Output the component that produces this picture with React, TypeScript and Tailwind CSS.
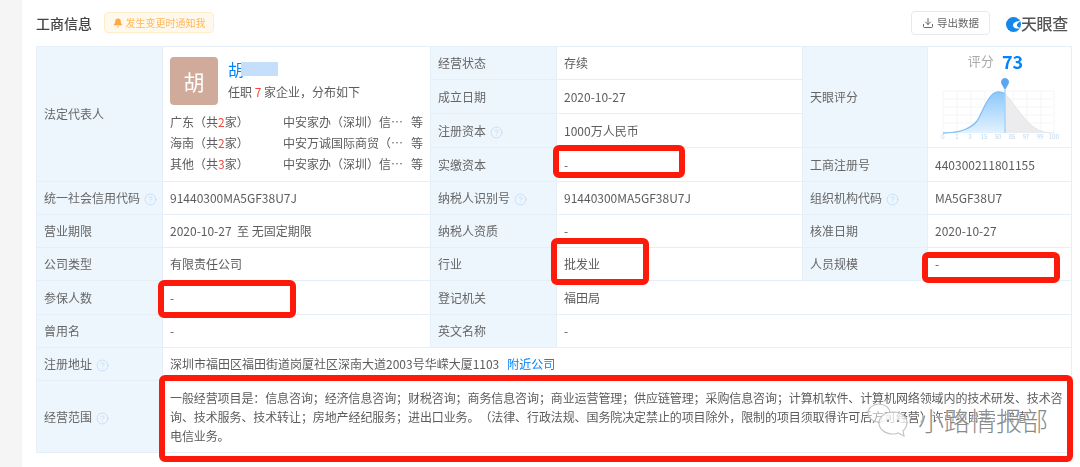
import { Bell, CircleHelp, Download } from 'lucide-react';
import type { ReactNode } from 'react';

const FONT = "font-['Noto_Sans_CJK_SC','Noto_Sans',sans-serif]";

function Help() {
  return <CircleHelp size={13} strokeWidth={1.2} className="ml-1 inline-block align-[-3px] text-[#b5d5f3]" />;
}

function Label({ children, help, rowSpan }: { children: ReactNode; help?: boolean; rowSpan?: number }) {
  return (
    <td rowSpan={rowSpan} className="border border-[#e6eff8] bg-[#edf5fd] pl-[7px] text-[#666]">
      {children}
      {help && <Help />}
    </td>
  );
}

function Value({ children, colSpan }: { children: ReactNode; colSpan?: number }) {
  return (
    <td colSpan={colSpan} className="border border-[#e6eff8] pl-[7px] text-[#5c5c5c]">
      {children}
    </td>
  );
}

const REGIONS = [
  { name: '广东', count: 2, company: '中安家办（深圳）信…' },
  { name: '海南', count: 2, company: '中安万诚国际商贸（…' },
  { name: '其他', count: 3, company: '中安家办（深圳）信…' },
];

function Person() {
  return (
    <div className="px-[7px] pt-[10px]">
      <div className="flex">
        <div className="flex h-12 w-12 items-center justify-center rounded bg-[#d0ab9b] text-[21px] text-white">胡</div>
        <div className="ml-[10px]">
          <div className="flex h-6 items-center text-base text-[#0084ff]">
            胡
            <div className="-ml-[3px] h-[14px] w-[37px] bg-[#c5defc]" />
          </div>
          <div className="mt-[3px] text-[#5c5c5c]">
            任职 <span className="text-[#f5483b]">7</span> 家企业，分布如下
          </div>
        </div>
      </div>
      <div className="mt-[8px] space-y-[3px]">
        {REGIONS.map((r, i) => (
          <div key={i} className="flex h-[18px] items-center whitespace-nowrap text-[#5c5c5c]">
            <span className="w-[113px]">
              {r.name}（共<span className="text-[#f5483b]">{r.count}</span>家）
            </span>
            <span className="w-[128px]">{r.company}</span>
            <span>等</span>
          </div>
        ))}
      </div>
    </div>
  );
}

function ScoreChart() {
  const labels = [
    [0, '0'], [14, '1'], [27, '3'], [41, '15'], [55, '50'], [69, '85'], [83, '97'], [97, '99'], [111, '100'],
  ] as const;
  const left = 'M0 44 C10 44 16 43 22 40.5 C28 38 31 36 34 32 C38 26 41 17 45 11 C48 6 51 3 55 2.8 C58 2.7 60 3.5 62 4.7';
  const right = 'M62 4.7 C68 11 72 18 78 25 C83 31 87 36 92 39 C98 43 104 44 111 44';
  return (
    <svg width="122" height="66" viewBox="-4 -14 122 66" className="mx-auto block">
      <defs>
        <linearGradient id="scoreFill" x1="0" y1="0" x2="0" y2="1">
          <stop offset="0" stopColor="#8cc8fb" />
          <stop offset="1" stopColor="#e3f2ff" />
        </linearGradient>
      </defs>
      {[0, 14, 28, 42, 56, 70, 84, 98, 111].map((x) => (
        <line key={x} x1={x} y1="2" x2={x} y2="44" stroke="#f4f5f7" strokeWidth="1" />
      ))}
      {[2, 10, 18, 26, 34].map((y) => (
        <line key={y} x1="0" y1={y} x2="111" y2={y} stroke="#f4f5f7" strokeWidth="1" />
      ))}
      <path d={`${right} L62 44 Z`} fill="#ececee" />
      <path d={`${left} L62 44 Z`} fill="url(#scoreFill)" />
      <path d={left} fill="none" stroke="#7fbdf8" strokeWidth="1.3" />
      <path d={right} fill="none" stroke="#e3e3e6" strokeWidth="1" />
      <line x1="62" y1="1" x2="62" y2="44" stroke="#a4d2fb" strokeWidth="1.4" />
      <path d="M62 1 L58.5 -5 A4 4 0 1 1 65.5 -5 Z" fill="#5ba6ee" />
      {labels.map(([x, t]) => (
        <text key={t} x={x} y="50" textAnchor="middle" fontSize="6" fill="#b9d6ef">
          {t}
        </text>
      ))}
    </svg>
  );
}

function Logo() {
  return (
    <div className="flex items-center">
      <svg width="15" height="15" viewBox="0 0 16 16" className="mt-[3px]">
        <circle cx="8" cy="8" r="8" fill="#1487e8" />
        <path d="M16 4 C11.5 4 7.5 6 7.5 9 C7.5 11.5 11 13 15.5 12 C13 11 11.5 10 11.5 8.8 C11.5 7.2 13 6 16 4Z" fill="#fff" />
      </svg>
      <span className="text-base leading-none font-medium tracking-[-0.3px] text-[#555]">天眼查</span>
    </div>
  );
}

function RedBox({ className }: { className: string }) {
  return <div className={`absolute rounded-[6px] border-[6px] border-[#fe1a0a] ${className}`} />;
}

export default function App() {
  return (
    <div className={`relative flex h-[467px] w-[1080px] overflow-hidden bg-white text-xs ${FONT}`}>
      <div className="w-[22px] shrink-0 bg-[#f5f5f5]" />
      <div className="w-[1049px] pl-[14px] blur-[0.4px]">
        <div className="flex h-[46px] items-center pr-[3px] pb-[1px]">
          <span className="text-sm font-medium text-[#444]">工商信息</span>
          <span className="ml-3 flex h-[21px] w-[110px] items-center justify-center rounded-sm border border-[#ffeccb] bg-[#fff8ec] text-[10px] text-[#ffb95f]">
            <Bell size={10} fill="#ffa940" strokeWidth={1.5} className="mr-[3px] text-[#ffa940]" />
            发生变更时通知我
          </span>
          <div className="ml-auto flex items-center">
            <span className="flex h-[24px] w-[79px] items-center justify-center rounded-sm border border-[#e8e8e8] text-[10.5px] text-[#666]">
              <Download size={12} className="mr-[3px]" />
              导出数据
            </span>
            <div className="ml-4">
              <Logo />
            </div>
          </div>
        </div>
        <table className="w-[1035px] table-fixed border-collapse">
          <colgroup>
            <col className="w-[126px]" />
            <col className="w-[268px]" />
            <col className="w-[126px]" />
            <col className="w-[246px]" />
            <col className="w-[125px]" />
            <col className="w-[144px]" />
          </colgroup>
          <tbody>
            <tr className="h-[33px]">
              <Label rowSpan={4}>法定代表人</Label>
              <td rowSpan={4} className="border border-[#e6eff8] align-top">
                <Person />
              </td>
              <Label>经营状态</Label>
              <Value>存续</Value>
              <Label rowSpan={3}>天眼评分</Label>
              <td rowSpan={3} className="border border-[#e6eff8] align-top">
                <div className="flex h-[28px] items-center justify-center pr-[8px]">
                  <span className="text-[13px] text-[#aaa]">评分</span>
                  <span className="ml-2 text-lg leading-none font-bold text-[#0084ff]">73</span>
                </div>
                <ScoreChart />
              </td>
            </tr>
            <tr className="h-[34px]">
              <Label>成立日期</Label>
              <Value>2020-10-27</Value>
            </tr>
            <tr className="h-[34px]">
              <Label help>注册资本</Label>
              <Value>1000万人民币</Value>
            </tr>
            <tr className="h-[34px]">
              <Label>实缴资本</Label>
              <Value>-</Value>
              <Label>工商注册号</Label>
              <Value>440300211801155</Value>
            </tr>
            <tr className="h-[33px]">
              <Label help>统一社会信用代码</Label>
              <Value>91440300MA5GF38U7J</Value>
              <Label help>纳税人识别号</Label>
              <Value>91440300MA5GF38U7J</Value>
              <Label help>组织机构代码</Label>
              <Value>MA5GF38U7</Value>
            </tr>
            <tr className="h-[33px]">
              <Label>营业期限</Label>
              <Value>2020-10-27&nbsp; 至 无固定期限</Value>
              <Label>纳税人资质</Label>
              <Value>-</Value>
              <Label>核准日期</Label>
              <Value>2020-10-27</Value>
            </tr>
            <tr className="h-[33px]">
              <Label>公司类型</Label>
              <Value>有限责任公司</Value>
              <Label>行业</Label>
              <Value>批发业</Value>
              <Label>人员规模</Label>
              <Value>-</Value>
            </tr>
            <tr className="h-[34px]">
              <Label>参保人数</Label>
              <Value>-</Value>
              <Label>登记机关</Label>
              <Value colSpan={3}>福田局</Value>
            </tr>
            <tr className="h-[33px]">
              <Label>曾用名</Label>
              <Value>-</Value>
              <Label>英文名称</Label>
              <Value colSpan={3}>-</Value>
            </tr>
            <tr className="h-[33px]">
              <Label help>注册地址</Label>
              <Value colSpan={5}>
                深圳市福田区福田街道岗厦社区深南大道2003号华嵘大厦1103
                <span className="ml-2 text-[#0084ff]">附近公司</span>
              </Value>
            </tr>
            <tr className="h-[72px]">
              <Label help>经营范围</Label>
              <td colSpan={5} className="border border-[#e6eff8] pl-[7px] leading-[19px] tracking-[-0.1px] whitespace-nowrap text-[#5c5c5c] [text-spacing-trim:space-all]">
                一般经营项目是：信息咨询；经济信息咨询；财税咨询；商务信息咨询；商业运营管理；供应链管理；采购信息咨询；计算机软件、计算机网络领域内的技术研发、技术咨
                <br />
                询、技术服务、技术转让；房地产经纪服务；进出口业务。（法律、行政法规、国务院决定禁止的项目除外，限制的项目须取得许可后方可经营）许可项目是：增值
                <br />
                电信业务。
              </td>
            </tr>
          </tbody>
        </table>
      </div>
      <RedBox className="top-[145px] left-[553px] h-[33px] w-[132px]" />
      <RedBox className="top-[238px] left-[551px] h-[47px] w-[98px]" />
      <RedBox className="top-[252px] left-[922px] h-[31px] w-[138px]" />
      <RedBox className="top-[280px] left-[158px] h-[38px] w-[138px]" />
      <RedBox className="top-[375px] left-[159px] h-[87px] w-[914px]" />
      <div className="absolute top-[400px] left-[866px] flex items-center text-[26px] leading-none font-light text-[#8a8a8a] [text-shadow:0_0_2px_#fff,0_0_2px_#fff]">
        <svg width="42" height="40" viewBox="0 0 42 40" fill="none" stroke="#c4c4c4" strokeWidth="1.2" className="mr-[10px]">
          <ellipse cx="13" cy="13" rx="11" ry="9" fill="#fff" fillOpacity="0.5" />
          <path d="M27 12 C35 12 41 17 41 23 C41 26 39 29 37 31 L38 36 L32 33 C30 34 29 34 27 34 C19 34 13 29 13 23 C13 17 19 12 27 12Z" fill="#fff" fillOpacity="0.75" />
          <circle cx="22" cy="21" r="1" fill="#777" stroke="none" />
          <circle cx="32" cy="21" r="1" fill="#777" stroke="none" />
        </svg>
        小路情报部
      </div>
    </div>
  );
}
